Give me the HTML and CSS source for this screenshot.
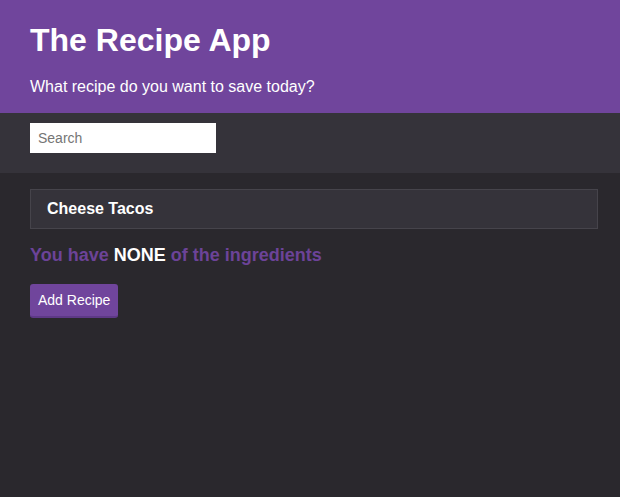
FILE: index.html
```html
<!DOCTYPE html>
<html>
<head>
<meta charset="utf-8">
<link rel="stylesheet" href="styles.css">
</head>
<body>
<header class="header">
  <h1 class="title">The Recipe App</h1>
  <p class="subtitle">What recipe do you want to save today?</p>
</header>
<div class="searchbar">
  <input class="search" type="text" placeholder="Search">
</div>
<main class="main">
  <div class="card">Cheese Tacos</div>
  <p class="status">You have <span class="none">NONE</span> of the ingredients</p>
  <button class="add">Add Recipe</button>
</main>
</body>
</html>
```
FILE: styles.css
```css
html, body {
  margin: 0;
  padding: 0;
  height: 100%;
}
body {
  background: #2a282d;
  font-family: "Liberation Sans", Arial, sans-serif;
  color: #fff;
}
.header {
  background: #70459c;
  padding: 20px 30px 16px;
}
.title {
  margin: 0;
  font-size: 32px;
  line-height: 40px;
  font-weight: bold;
}
.subtitle {
  margin: 17px 0 0;
  font-size: 16px;
  line-height: 20px;
}
.searchbar {
  background: #35333a;
  padding: 10px 30px;
  height: 40px;
}
.search {
  display: block;
  box-sizing: border-box;
  width: 186px;
  height: 30px;
  border: none;
  outline: none;
  padding: 0 8px;
  font-family: "Liberation Sans", Arial, sans-serif;
  font-size: 14px;
  background: #fff;
}
.search::placeholder {
  color: #757575;
}
.main {
  padding: 16px 22px 0 30px;
}
.card {
  box-sizing: border-box;
  height: 40px;
  background: #35333a;
  border: 1px solid #46444b;
  padding: 0 16px;
  display: flex;
  align-items: center;
  font-weight: bold;
  font-size: 16px;
}
.status {
  margin: 14px 0 0;
  font-size: 18px;
  line-height: 24px;
  font-weight: bold;
  color: #6c4398;
}
.none {
  color: #fff;
}
.add {
  display: block;
  margin-top: 17px;
  height: 34px;
  padding: 0 8px;
  background: #70459c;
  color: #fff;
  border: none;
  border-bottom: 2px solid #5e3987;
  border-radius: 3px;
  font-family: "Liberation Sans", Arial, sans-serif;
  font-size: 14px;
}
```
